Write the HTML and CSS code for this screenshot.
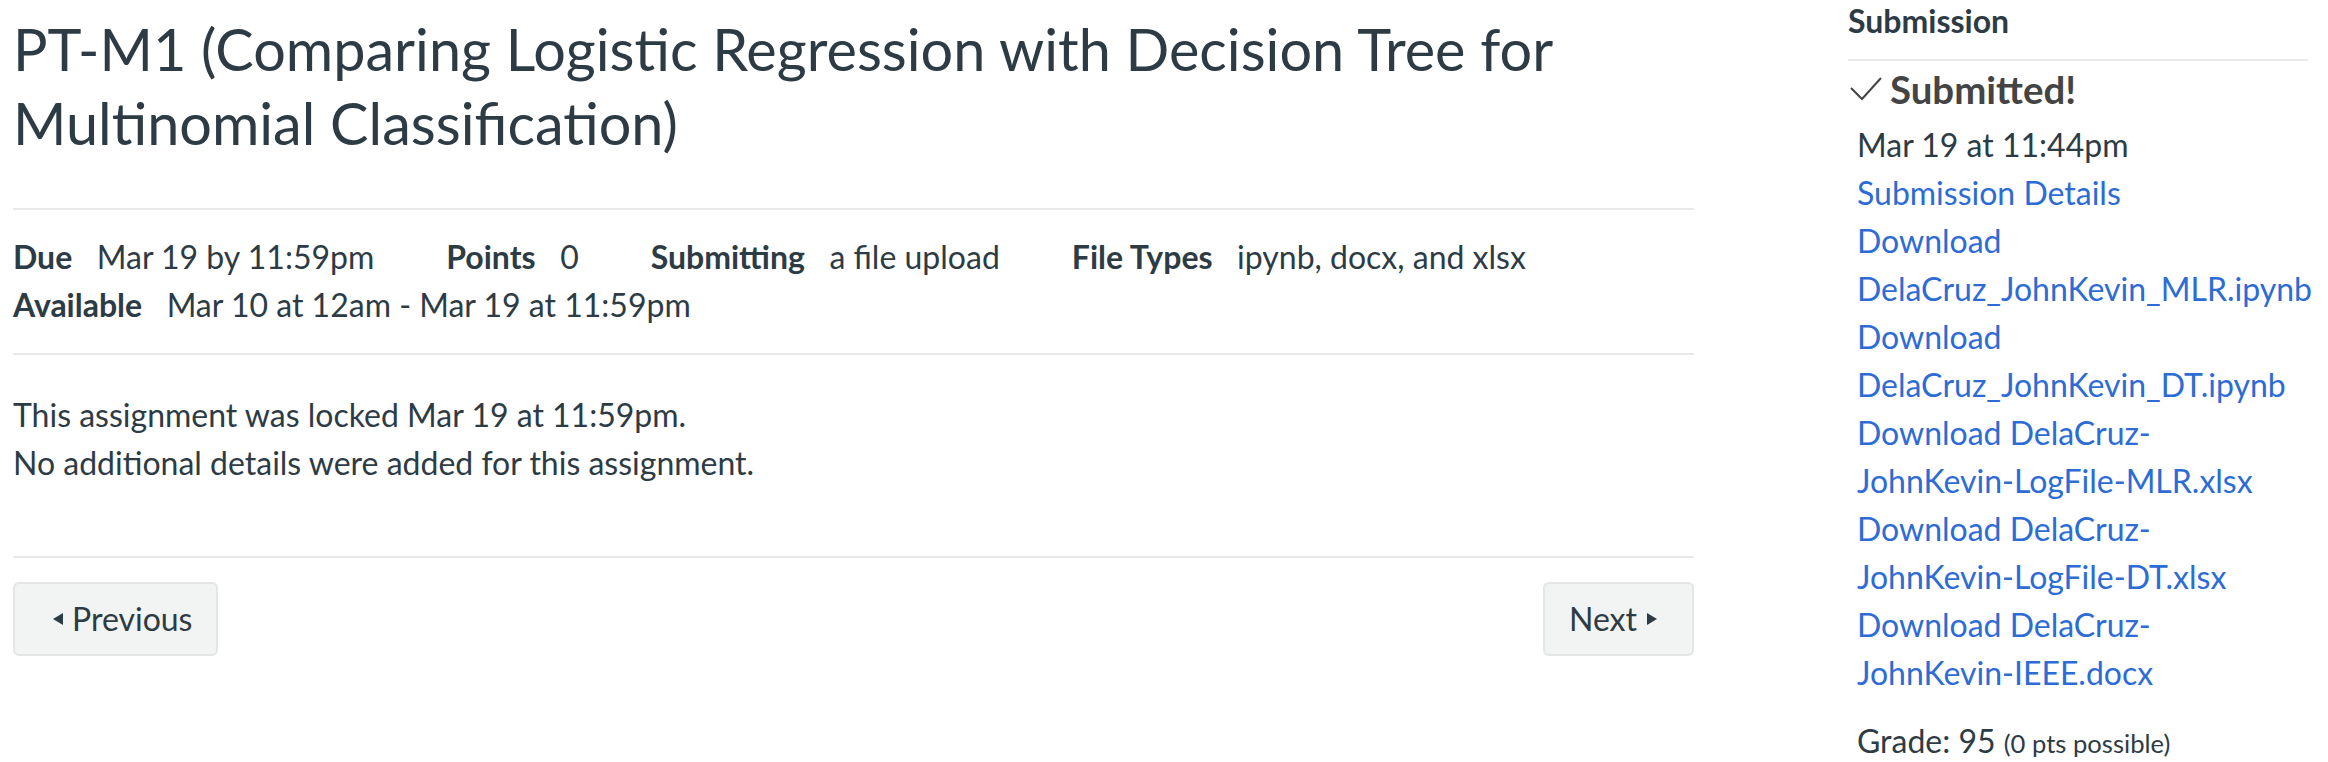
FILE: index.html
```html
<!DOCTYPE html>
<html lang="en">
<head>
<meta charset="utf-8">
<title>PT-M1</title>
<link rel="stylesheet" href="styles.css">
</head>
<body>
<div class="page">
  <main class="content">
    <h1 class="title">PT-M1 (Comparing Logistic Regression with Decision Tree for Multinomial Classification)</h1>
    <ul class="details">
      <li class="detail"><span class="label">Due</span><span class="value">Mar 19 by 11:59pm</span></li>
      <li class="detail"><span class="label">Points</span><span class="value">0</span></li>
      <li class="detail"><span class="label">Submitting</span><span class="value">a file upload</span></li>
      <li class="detail"><span class="label">File Types</span><span class="value">ipynb, docx, and xlsx</span></li>
      <li class="detail"><span class="label">Available</span><span class="value">Mar 10 at 12am - Mar 19 at 11:59pm</span></li>
    </ul>
    <div class="description">
      <p>This assignment was locked Mar 19 at 11:59pm.</p>
      <p>No additional details were added for this assignment.</p>
    </div>
    <nav class="pager">
      <a class="btn" href="#"><svg class="arrow arrow-left" viewBox="0 0 10 12" width="10" height="12"><path d="M10 0 L0 6 L10 12 Z"/></svg>Previous</a>
      <a class="btn" href="#">Next<svg class="arrow arrow-right" viewBox="0 0 10 12" width="10" height="12"><path d="M0 0 L10 6 L0 12 Z"/></svg></a>
    </nav>
  </main>
  <aside class="sidebar">
    <h2 class="side-title">Submission</h2>
    <div class="status">
      <svg class="check" viewBox="0 0 32 24" width="32" height="24"><path d="M1 11 L12 22 L31 1"/></svg>
      <span>Submitted!</span>
    </div>
    <div class="side-body">
      <div class="date">Mar 19 at 11:44pm</div>
      <a class="link" href="#">Submission Details</a>
      <a class="link" href="#">Download DelaCruz_JohnKevin_MLR.ipynb</a>
      <a class="link" href="#">Download DelaCruz_JohnKevin_DT.ipynb</a>
      <a class="link" href="#">Download DelaCruz-JohnKevin-LogFile-MLR.xlsx</a>
      <a class="link" href="#">Download DelaCruz-JohnKevin-LogFile-DT.xlsx</a>
      <a class="link" href="#">Download DelaCruz-JohnKevin-IEEE.docx</a>
      <div class="grade">Grade: 95 <span class="possible">(0 pts possible)</span></div>
    </div>
  </aside>
</div>
</body>
</html>
```

FILE: styles.css
```css
html, body {
  margin: 0;
  padding: 0;
  background: #ffffff;
}
body {
  font-family: Lato, "Noto Sans", "Liberation Sans", sans-serif;
  font-size: 32px;
  line-height: 48px;
  color: #2d3b45;
}
.page {
  display: flex;
  align-items: flex-start;
}
.content {
  margin-left: 13px;
  width: 1681px;
  flex: none;
}
.title {
  margin: 12px 0 0 0;
  padding-bottom: 48px;
  font-size: 57.6px;
  line-height: 74px;
  font-weight: 400;
  color: #2d3b45;
}
.details {
  list-style: none;
  margin: 0;
  padding: 23px 0 24px 0;
  border-top: 2px solid #e8e9ea;
  border-bottom: 2px solid #e8e9ea;
  display: flex;
  flex-wrap: wrap;
  column-gap: 72px;
}
.detail {
  display: flex;
}
.label {
  font-weight: 700;
  margin-right: 24.5px;
}
.description {
  padding: 36px 0 69px 0;
}
.description p {
  margin: 0;
}
.pager {
  border-top: 2px solid #e8e9ea;
  padding-top: 24px;
  display: flex;
  justify-content: space-between;
}
.btn {
  display: inline-flex;
  align-items: center;
  padding: 17px 24px;
  line-height: 36px;
  border: 2px solid #e3e5e6;
  border-radius: 6px;
  background: #f2f3f3;
  color: #2d3b45;
  text-decoration: none;
}
.arrow {
  fill: #2d3b45;
  flex: none;
}
.arrow-left {
  margin: 0 9px 0 14px;
}
.arrow-right {
  margin: 0 11px 0 10px;
}
.sidebar {
  margin-left: 154px;
  width: 460px;
  flex: none;
}
.side-title {
  margin: 3px 0 0 0;
  padding-bottom: 20px;
  border-bottom: 2px solid #e8e9ea;
  font-size: 32px;
  line-height: 36px;
  font-weight: 700;
  color: #2d3b45;
}
.status {
  display: flex;
  align-items: center;
  margin-top: 7px;
  font-size: 38.4px;
  line-height: 42px;
  font-weight: 700;
  color: #444444;
}
.check {
  fill: none;
  stroke: #444444;
  stroke-width: 2;
  margin: 0 8px 0 2px;
  flex: none;
}
.side-body {
  padding-left: 9px;
  margin-top: 11px;
}
.date {
  color: #2d3b45;
}
.link {
  display: block;
  color: #2d6bd5;
  text-decoration: none;
  width: 430px;
}
.grade {
  margin-top: 20px;
}
.possible {
  font-size: 25.6px;
}
```
